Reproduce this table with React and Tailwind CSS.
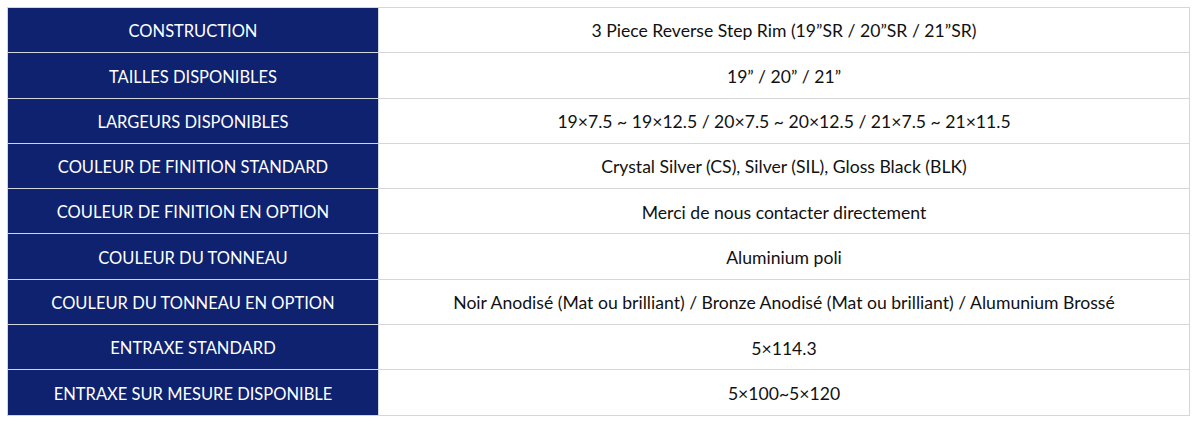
const rows = [
  ['CONSTRUCTION', '3 Piece Reverse Step Rim (19”SR / 20”SR / 21”SR)'],
  ['TAILLES DISPONIBLES', '19” / 20” / 21”'],
  ['LARGEURS DISPONIBLES', '19×7.5 ~ 19×12.5 / 20×7.5 ~ 20×12.5 / 21×7.5 ~ 21×11.5'],
  ['COULEUR DE FINITION STANDARD', 'Crystal Silver (CS), Silver (SIL), Gloss Black (BLK)'],
  ['COULEUR DE FINITION EN OPTION', 'Merci de nous contacter directement'],
  ['COULEUR DU TONNEAU', 'Aluminium poli'],
  ['COULEUR DU TONNEAU EN OPTION', 'Noir Anodisé (Mat ou brilliant) / Bronze Anodisé (Mat ou brilliant) / Alumunium Brossé'],
  ['ENTRAXE STANDARD', '5×114.3'],
  ['ENTRAXE SUR MESURE DISPONIBLE', '5×100~5×120'],
];

export default function App() {
  return (
    <main className="w-[1200px] h-[425px] bg-white pt-[7px] pl-[7px]" style={{ fontFamily: 'Lato, "Open Sans", sans-serif' }}>
      <table className="border-collapse w-[1183px] table-fixed">
        <colgroup>
          <col className="w-[371px]" />
          <col />
        </colgroup>
        <tbody>
          {rows.map(([label, value]) => (
            <tr key={label} className="h-[45.3px]">
              <td className="bg-[#0e2270] text-white text-[16.5px] text-center border border-[#d4d6de] px-0 pt-[3px] pb-0">
                {label}
              </td>
              <td className="bg-white text-[#111111] text-[17.6px] text-center border border-[#d6d6d6] px-0 pt-[3px] pb-0">
                {value}
              </td>
            </tr>
          ))}
        </tbody>
      </table>
    </main>
  );
}
